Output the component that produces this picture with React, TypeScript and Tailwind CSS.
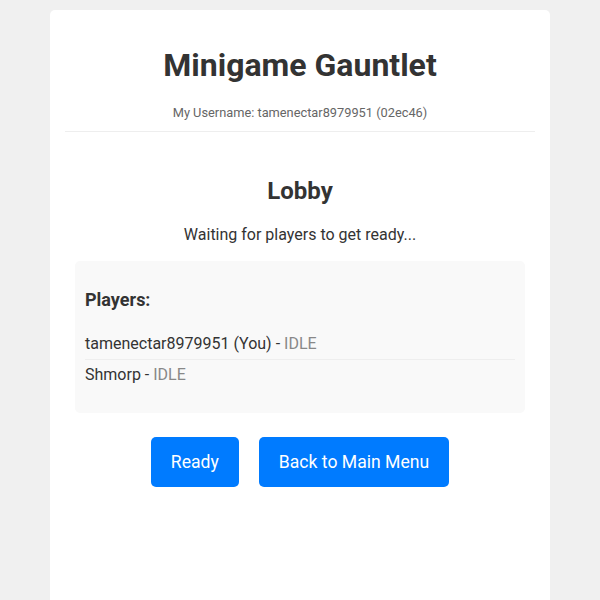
import React from "react";

export default function App() {
  const players = [
    { name: "tamenectar8979951 (You)", status: "IDLE" },
    { name: "Shmorp", status: "IDLE" },
  ];
  return (
    <div
      className="min-h-[600px] w-full bg-[#f0f0f0] pt-[10px] text-[#333]"
      style={{ fontFamily: "Roboto, 'Liberation Sans', sans-serif" }}
    >
      <div className="mx-auto min-h-[620px] w-[500px] rounded-[5px] bg-white">
        <div className="mx-[15px] border-b border-[#eeeeee] pb-[10px] pt-[36px] text-center">
          <h1 className="text-[32px] font-bold leading-[38px] text-[#333]">Minigame Gauntlet</h1>
          <p className="mt-[21px] text-[12.8px] leading-[16px] text-[#666]">
            My Username: tamenectar8979951 (02ec46)
          </p>
        </div>
        <div className="px-[25px] pt-[45px]">
          <h2 className="text-center text-[24px] font-bold leading-[28px] text-[#333]">Lobby</h2>
          <p className="mt-[20px] text-center text-[16px] leading-[19px] text-[#333]">
            Waiting for players to get ready...
          </p>
          <div className="mt-[17px] rounded-[5px] bg-[#f9f9f9] p-[10px]">
            <h3 className="mt-[18px] text-[18px] font-bold leading-[21px] text-[#333]">Players:</h3>
            <ul className="mt-[19px] mb-[13px]">
              {players.map((p, i) => (
                <li
                  key={p.name}
                  className={
                    "py-[5px] text-[16px] leading-[20px] text-[#333] " +
                    (i < players.length - 1 ? "border-b border-[#eeeeee]" : "")
                  }
                >
                  {p.name} - <span className="text-[#888]">{p.status}</span>
                </li>
              ))}
            </ul>
          </div>
          <div className="mt-[24px] flex justify-center gap-[20px]">
            <button className="h-[50px] rounded-[5px] bg-[#007bff] px-[20px] text-[17.6px] text-white">
              Ready
            </button>
            <button className="h-[50px] rounded-[5px] bg-[#007bff] px-[20px] text-[17.6px] text-white">
              Back to Main Menu
            </button>
          </div>
        </div>
      </div>
    </div>
  );
}
